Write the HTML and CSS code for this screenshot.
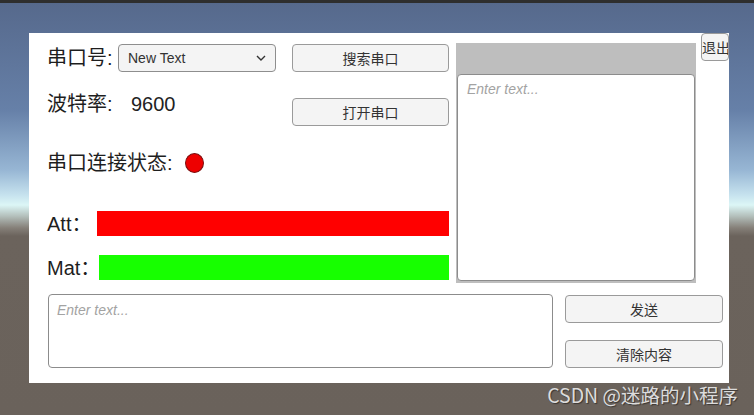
FILE: index.html
```html
<!DOCTYPE html>
<html lang="zh-CN">
<head>
    <meta charset="UTF-8">
    <meta name="viewport" content="width=device-width, initial-scale=1.0">
    <title>串口调试</title>
    <link rel="stylesheet" href="styles.css">
</head>
<body>
    <div class="panel">
        <div class="top">
            <div class="controls">
                <div class="row row-port">
                    <span class="label label-port">串口号:</span>
                    <div class="select">
                        <span>New Text</span>
                        <svg width="10" height="6" viewBox="0 0 10 6"><path d="M1 1 L5 5 L9 1" fill="none" stroke="#333" stroke-width="1.4"/></svg>
                    </div>
                    <button class="btn">搜索串口</button>
                </div>
                <div class="row row-baud">
                    <span class="label label-baud">波特率:</span>
                    <span class="baud">9600</span>
                    <button class="btn">打开串口</button>
                </div>
                <div class="row row-state">
                    <span class="label label-state">串口连接状态:</span>
                    <span class="lamp"></span>
                </div>
                <div class="row row-att">
                    <span class="label label-att">Att：</span>
                    <div class="bar bar-att"></div>
                </div>
                <div class="row row-mat">
                    <span class="label label-mat">Mat：</span>
                    <div class="bar bar-mat"></div>
                </div>
            </div>
            <div class="log">
                <textarea class="log-box" placeholder="Enter text..."></textarea>
            </div>
            <button class="btn btn-exit">退出</button>
        </div>
        <div class="bottom">
            <textarea class="send-box" placeholder="Enter text..."></textarea>
            <div class="actions">
                <button class="btn btn-send">发送</button>
                <button class="btn btn-clear">清除内容</button>
            </div>
        </div>
    </div>
    <div class="watermark">CSDN @迷路的小程序</div>
</body>
</html>
```

FILE: styles.css
```css
body {
    margin: 0;
    width: 754px;
    height: 415px;
    overflow: hidden;
    position: relative;
    font-family: "Liberation Sans", "Noto Sans CJK SC", sans-serif;
    background: linear-gradient(to bottom,
        #2e2e2e 0px, #2e2e2e 3px,
        #56698c 3px, #6680a8 110px,
        #97b6d4 170px, #c6e2ee 195px,
        #dcf6f6 205px, #b4c0bc 216px,
        #857f78 228px, #6b635c 236px, #6a625b 100%);
}
.panel {
    margin: 33px 0 0 29px;
    width: 700px;
    height: 350px;
    background: #fff;
}
.top {
    display: flex;
    align-items: flex-start;
}
.controls {
    width: 420px;
    padding-left: 18px;
    box-sizing: border-box;
}
.row {
    display: flex;
    align-items: center;
}
.label {
    font-family: "Liberation Sans", "Noto Sans CJK SC", sans-serif;
    font-size: 20px;
    color: #1e1e1e;
    line-height: 28px;
    white-space: nowrap;
}
.row-port {
    margin-top: 11px;
    height: 28px;
}
.label-port {
    width: 71px;
}
.select {
    width: 158px;
    height: 28px;
    box-sizing: border-box;
    border: 1px solid #8e8e8e;
    border-radius: 4px;
    background: #f4f4f4;
    display: flex;
    align-items: center;
    justify-content: space-between;
    padding: 0 9px 0 9px;
    font-size: 14px;
    color: #333;
}
.btn {
    height: 28px;
    box-sizing: border-box;
    border: 1px solid #9a9a9a;
    border-radius: 4px;
    background: #f4f4f4;
    font-family: "Noto Sans CJK SC", sans-serif;
    font-size: 14px;
    color: #333;
    padding: 0;
    cursor: pointer;
}
.row .btn {
    width: 157px;
    margin-left: auto;
}
.row-baud {
    margin-top: 26px;
    height: 28px;
    align-items: flex-start;
}
.label-baud {
    width: 84px;
    margin-top: -8px;
}
.baud {
    font-size: 20px;
    color: #222;
    line-height: 28px;
    margin-top: -8px;
}
.row-state {
    margin-top: 27px;
    height: 20px;
}
.label-state {
    width: 138px;
}
.lamp {
    width: 17px;
    height: 18px;
    border-radius: 50%;
    background: #ee0000;
    border: 1px solid #7a1010;
}
.row-att {
    margin-top: 38px;
    height: 25px;
}
.label-att {
    width: 50px;
}
.row-mat {
    margin-top: 19px;
    height: 25px;
}
.label-mat {
    width: 52px;
}
.bar {
    flex: 1;
    height: 25px;
}
.bar-att {
    background: #ff0000;
}
.bar-mat {
    background: #17ff00;
}
.log {
    margin: 10px 0 0 7px;
    width: 240px;
    height: 240px;
    background: #bebebe;
    padding: 31px 1px 2px 1px;
    box-sizing: border-box;
}
textarea {
    display: block;
    resize: none;
    margin: 0;
    box-sizing: border-box;
    border: 1px solid #8c8c8c;
    border-radius: 4px;
    background: #fff;
    font-family: "Liberation Sans", sans-serif;
    font-size: 14px;
    line-height: 16px;
    outline: none;
}
textarea::placeholder {
    color: #a3a3a3;
    font-style: italic;
}
.log-box {
    width: 238px;
    height: 207px;
    padding: 6px 9px;
}
.btn-exit {
    width: 28px;
    margin-left: 5px;
    white-space: nowrap;
    overflow: hidden;
}
.bottom {
    display: flex;
    margin-top: 11px;
}
.send-box {
    margin-left: 19px;
    width: 505px;
    height: 74px;
    padding: 7px 8px;
}
.actions {
    margin-left: 12px;
    width: 158px;
    display: flex;
    flex-direction: column;
}
.btn-send {
    margin-top: 1px;
}
.btn-clear {
    margin-top: 17px;
}
.watermark {
    position: absolute;
    right: 16px;
    top: 381px;
    font-family: "Noto Sans CJK SC", sans-serif;
    font-size: 19.5px;
    line-height: 28px;
    color: #dcdcdc;
    text-shadow: 1px 1px 1px rgba(0, 0, 0, 0.45);
}
```
